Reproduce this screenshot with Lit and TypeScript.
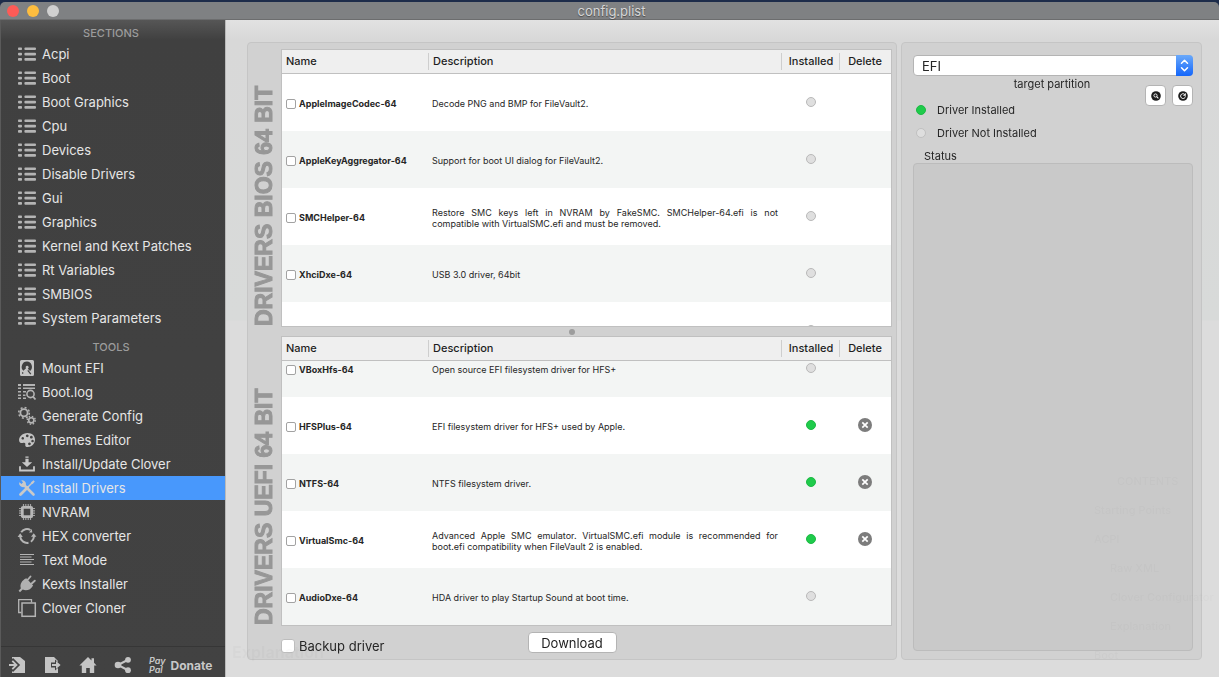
import { LitElement, html, css, svg, nothing } from "lit";
import { customElement, property, query } from "lit/decorators.js";
import { classMap } from "lit/directives/class-map.js";

interface Driver {
  name: string;
  description: string;
  installed: boolean;
}

const icons: Record<string, unknown> = {
  list: svg`<g fill="#b4b4b4"><rect x="0" y="2.500" width="4" height="2.600" rx=".8"/><rect x="0" y="7.800" width="4" height="2.600" rx=".8"/><rect x="0" y="13.100" width="4" height="2.600" rx=".8"/><rect x="6.400" y="2.500" width="11.600" height="2.600" rx="1"/><rect x="6.400" y="7.800" width="11.600" height="2.600" rx="1"/><rect x="6.400" y="13.100" width="11.600" height="2.600" rx="1"/></g>`,
  disk: svg`<path fill="#c4c4c4" fill-rule="evenodd" d="M3.500 1h11A1.500 1.500 0 0 1 16 2.500v13a1.500 1.500 0 0 1-1.500 1.500h-11A1.500 1.500 0 0 1 2 15.500v-13A1.500 1.500 0 0 1 3.500 1zM9 2.600a5.300 5.300 0 0 0-3.600 9.200L8 9.300a1.500 1.500 0 1 1 1.800.4l2.300 2.200A5.300 5.300 0 0 0 9 2.600zM4 13.300v1.500h1.300v-1.500zM9.300 11.800l3 3.700 1-.7-3-3.700z"/>`,
  log: svg`<g fill="#b4b4b4"><path d="M0 1h3v2H0zM5 1h12v2H5zM0 4.500h3v1.500H0zM5 4.500h12v1.500H5zM0 8h3v1.500H0zM5 8h3v1.500H5zM0 11.500h3V13H0zM5 11.500h2.500V13H5zM0 14.500h3V16H0zM5 14.500h3V16H5z"/></g><circle cx="12.500" cy="11" r="3.600" fill="#424242" stroke="#b4b4b4" stroke-width="1.600"/><path d="m15 13.700 2.500 2.800" stroke="#b4b4b4" stroke-width="1.800"/>`,
  gears: svg`<g fill="none" stroke="#b4b4b4"><circle cx="6" cy="5.800" r="3.600" stroke-width="1.800"/><circle cx="6" cy="5.800" r="5.300" stroke-width="1.600" stroke-dasharray="2 2.160"/><circle cx="13.300" cy="13.300" r="2.600" stroke-width="1.600"/><circle cx="13.300" cy="13.300" r="4" stroke-width="1.400" stroke-dasharray="1.500 1.640"/></g>`,
  palette: svg`<path fill="#c4c4c4" fill-rule="evenodd" d="M9.500 2C14 2 17 4.800 17 8.500c0 4.500-3.500 7.500-7.300 7.500-1.700 0-2.700-.9-2.400-2.300.3-1.500-.3-2.300-1.800-2-1.700.4-3.300.6-4.100-1C-.2 6.300 4.500 2 9.500 2zM9.200 3.400a1.400 1.400 0 1 0 .1 0zM4.700 6a1.300 1.300 0 1 0 .1 0zM13.300 4.800a1.400 1.400 0 1 0 .1 0zM14.500 8.700a1.300 1.300 0 1 0 .1 0zM11.400 11.400a1.400 1.400 0 1 0 .1 0z"/>`,
  download: svg`<path fill="#c8c8c8" d="M7.400 1.500h3.200v1.200H7.400zM7.400 3.700h3.200v3.600h3.600L9 12 3.800 7.300h3.600z"/><path fill="none" stroke="#c8c8c8" stroke-width="1.800" d="M2 11.300v4.200h14v-4.200"/>`,
  tools: svg`<path d="M5.500 5.500 15.500 15.500" stroke="#c9c9c9" stroke-width="2.600" stroke-linecap="round"/><path fill="#c9c9c9" d="M3.300 1.200 5 3.600 3.600 5 1.200 3.300A4 4 0 0 0 5.500 8.200L8 5.500A4 4 0 0 0 3.300 1.200z"/><path d="M2.500 15.500 9.500 8.500" stroke="#c9c9c9" stroke-width="2.800" stroke-linecap="round"/><path d="m9 9 5-5" stroke="#c9c9c9" stroke-width="1.500"/><path fill="#c9c9c9" d="m12.800 3.600 2.700-2.300 1.300 1.300-2.300 2.700z"/>`,
  chip: svg`<path stroke="#a4a4a4" stroke-width="1.200" d="M5.500 1v16M7.800 1v16M10.200 1v16M12.500 1v16M1 5.500h16M1 7.800h16M1 10.200h16M1 12.500h16"/><rect x="4.300" y="4.300" width="9.400" height="9.400" rx=".8" fill="#424242" stroke="#b8b8b8" stroke-width="2.800"/>`,
  cycle: svg`<g fill="none" stroke="#b4b4b4" stroke-width="2"><path d="M3.200 5.200A7 7 0 0 1 12.500 3M15.800 8a7 7 0 0 1-2.900 6.700M10.500 15.800A7 7 0 0 1 2.200 10"/></g><path fill="#b4b4b4" d="m13 9.800 2.700-3.600 2.700 3.600zM-.4 9.900 2.200 6.300l2.600 3.600zM11 5.600l3.300-.2-.5-3.400z"/>`,
  text: svg`<path stroke="#b4b4b4" stroke-width="1.100" d="M2 3.500h14M2 6h11.500M2 8.500h14M2 11h11.500M2 13.500h14"/>`,
  plug: svg`<path fill="#b0b0b0" d="m8.300 3.200 6.800 7.200c-2.300 4.400-6.600 5.800-10.400 4.200L2 17.200.6 15.700l2.300-2.400C1.500 9.500 3.700 5.200 8.300 3.200z"/><path stroke="#b0b0b0" stroke-width="1.900" stroke-linecap="round" d="m9.500 5 3-3.500M13.200 9l3.600-3.300"/>`,
  clone: svg`<path fill="none" stroke="#b4b4b4" stroke-width="1.300" d="M3.500 13.500H.7V.7h12.800v2.800"/><rect x="4" y="4" width="13.300" height="13.300" fill="none" stroke="#b4b4b4" stroke-width="1.500"/>`,
  import: svg`<path fill="#c4c4c4" d="M3 1h8l5 4v12H3z"/><path fill="none" stroke="#424242" stroke-width="4.400" d="M0 9h6.500M2.500 3.500 8 9l-5.500 5.500"/><path fill="none" stroke="#c4c4c4" stroke-width="1.800" d="M0 9h7M3.300 4.800 7.500 9l-4.200 4.200"/>`,
  export: svg`<path fill="#c4c4c4" d="M1 1h9l4 4v12H1z"/><path d="M7 9h6.500" stroke="#424242" stroke-width="5"/><path fill="#424242" d="m11 3.500 6.500 5.500-6.500 5.500z"/><path fill="#c4c4c4" d="M8 7.900h4V5l4.600 4-4.600 4v-2.900H8z"/>`,
  home: svg`<path fill="#c4c4c4" d="M9 1 12.500 4.400V2.300H15v4.500L17.600 9.500H15.200V17H10.800v-5H7.200v5H2.800V9.500H.4z"/>`,
  share: svg`<path fill="none" stroke="#c4c4c4" stroke-width="2" d="M13.500 4 4 9l9.500 5"/><g fill="#c4c4c4"><circle cx="14" cy="3.800" r="2.900"/><circle cx="4" cy="9" r="3.300"/><circle cx="14" cy="14.200" r="2.900"/></g>`,
};

const icon = (name: string) =>
  html`<svg class="icon" viewBox="0 0 18 18" width="18" height="18" aria-hidden="true">${icons[name]}</svg>`;

@customElement("side-nav")
export class SideNav extends LitElement {
  static styles = css`
    :host {
      display: flex;
      flex-direction: column;
      background: linear-gradient(#565656, #404040 20px, #424242);
      color: #e6e6e6;
      border-left: 1px solid #5a5a5a;
      box-sizing: border-box;
    }
    nav { flex: 1; padding-top: 4px; }
    h2 {
      margin: 0;
      padding-right: 4px;
      font-size: 11px;
      font-weight: 500;
      line-height: 18px;
      text-align: center;
      color: #9c9c9c;
    }
    ul { list-style: none; margin: 0 0 8px; padding: 0; }
    .item {
      display: flex;
      align-items: center;
      gap: 6px;
      height: 24px;
      padding-left: 17px;
      font-size: 13px;
      color: inherit;
      text-decoration: none;
    }
    .current { background: #4898fc; }
    .icon { flex: none; overflow: visible; }
    .bar {
      display: flex;
      align-items: center;
      gap: 17px;
      height: 22px;
      padding: 7px 8px 1px;
      border-top: 1px solid #363636;
    }
    .tool {
      display: flex;
      align-items: center;
      gap: 5px;
      padding: 0;
      border: 0;
      background: none;
      color: #c8c8c8;
      font: inherit;
    }
    .paypal {
      font-size: 9px;
      font-style: italic;
      font-weight: 600;
      line-height: 9px;
      text-align: left;
    }
    .donate { font-size: 12px; font-weight: 700; }
  `;

  private sections = ["Acpi", "Boot", "Boot Graphics", "Cpu", "Devices", "Disable Drivers", "Gui",
    "Graphics", "Kernel and Kext Patches", "Rt Variables", "SMBIOS", "System Parameters"];

  private tools: [string, string][] = [
    ["disk", "Mount EFI"], ["log", "Boot.log"], ["gears", "Generate Config"],
    ["palette", "Themes Editor"], ["download", "Install/Update Clover"], ["tools", "Install Drivers"],
    ["chip", "NVRAM"], ["cycle", "HEX converter"], ["text", "Text Mode"],
    ["plug", "Kexts Installer"], ["clone", "Clover Cloner"],
  ];

  private item(glyph: string, label: string) {
    const current = label === "Install Drivers";
    return html`<li><a class=${classMap({ item: true, current })} href="#"
      aria-current=${current ? "page" : nothing}>${icon(glyph)}<span>${label}</span></a></li>`;
  }

  render() {
    return html`
      <nav aria-label="Configuration">
        <h2>SECTIONS</h2>
        <ul>${this.sections.map((s) => this.item("list", s))}</ul>
        <h2>TOOLS</h2>
        <ul>${this.tools.map(([g, l]) => this.item(g, l))}</ul>
      </nav>
      <div class="bar">
        <button class="tool" aria-label="Import">${icon("import")}</button>
        <button class="tool" aria-label="Export">${icon("export")}</button>
        <button class="tool" aria-label="Home">${icon("home")}</button>
        <button class="tool" aria-label="Share">${icon("share")}</button>
        <button class="tool"><span class="paypal">Pay<br>Pal</span><span class="donate">Donate</span></button>
      </div>
    `;
  }
}

@customElement("driver-table")
export class DriverTable extends LitElement {
  @property() heading = "";
  @property({ attribute: false }) drivers: Driver[] = [];
  @property({ type: Boolean }) striped = false;
  @property({ type: Number }) offset = 0;
  @query(".scroller") private scroller!: HTMLElement;

  static styles = css`
    :host { display: flex; min-height: 0; }
    .heading {
      flex: none;
      margin: 0;
      width: 33px;
      box-sizing: border-box;
      padding-top: 1px;
      writing-mode: vertical-rl;
      transform: rotate(180deg);
      font-family: "Liberation Sans", sans-serif;
      font-size: 23px;
      font-weight: 700;
      line-height: 33px;
      color: #979797;
      -webkit-text-stroke: 1px #979797;
      white-space: nowrap;
    }
    .scroller {
      flex: 1;
      min-width: 0;
      overflow: auto;
      scrollbar-width: none;
      border: 1px solid #c0c0c0;
      background: #fff;
    }
    table { width: 100%; border-spacing: 0; table-layout: fixed; }
    th {
      position: sticky;
      top: 0;
      z-index: 1;
      box-sizing: border-box;
      height: 24px;
      padding: 0 4px 2px;
      border-bottom: 1px solid #c0c0c0;
      background: linear-gradient(#cecece, #cecece) no-repeat right center / 1px 17px, #efefef;
      font-size: 11px;
      font-weight: 500;
      text-align: left;
      color: #1e1e1e;
    }
    th:last-child { background: #efefef; }
    .name-col { width: 147px; }
    .installed-col { width: 58px; }
    .delete-col { width: 51px; }
    th.mid, td.mid { padding: 0 0 2px; text-align: center; }
    th.mid:last-child, td.mid:last-child { padding-right: 1px; }
    td { height: 57px; padding: 0 4px; box-sizing: border-box; font-size: 9px; line-height: 11px; color: #262626; }
    td.text { padding: 2px 4px 0 3px; text-align: justify; }
    .shade td { background: #f3f5f4; }
    .pick { display: flex; align-items: center; gap: 3px; padding-top: 2px; font-weight: 700; }
    input {
      appearance: none;
      flex: none;
      width: 10px;
      height: 10px;
      margin: 0;
      border: 1px solid #a2a2a2;
      border-radius: 2px;
      background: #fff;
    }
    .dot {
      display: inline-block;
      box-sizing: border-box;
      width: 10px;
      height: 10px;
      border: 1px solid #b9b9b9;
      border-radius: 50%;
      background: #dfdfdf;
      vertical-align: middle;
    }
    .dot.on { background: #1fcb4b; border-color: #1cb944; }
    .remove { padding: 0; border: 0; background: none; vertical-align: middle; }
    .remove svg { display: block; }
  `;

  firstUpdated() {
    this.scroller.scrollTop = this.offset;
  }

  render() {
    return html`
      <h2 class="heading">${this.heading}</h2>
      <div class="scroller">
        <table>
          <thead>
            <tr>
              <th class="name-col" scope="col">Name</th>
              <th scope="col">Description</th>
              <th class="mid installed-col" scope="col">Installed</th>
              <th class="mid delete-col" scope="col">Delete</th>
            </tr>
          </thead>
          <tbody>
            ${this.drivers.map((d, i) => html`
              <tr class=${classMap({ shade: (i % 2 === 0) === this.striped })}>
                <td><label class="pick"><input type="checkbox" aria-label=${d.name || "Driver"}>${d.name}</label></td>
                <td class="text">${d.description}</td>
                <td class="mid"><span class=${classMap({ dot: true, on: d.installed })}></span></td>
                <td class="mid">${d.installed ? html`
                  <button class="remove" aria-label="Delete ${d.name}">
                    <svg width="14" height="14" viewBox="0 0 14 14"><circle cx="7" cy="7" r="7" fill="#7c7c7c"/><path d="m4.300 4.300 5.400 5.400m0-5.400-5.400 5.400" stroke="#fff" stroke-width="1.700"/></svg>
                  </button>` : nothing}</td>
              </tr>`)}
          </tbody>
        </table>
      </div>
    `;
  }
}

@customElement("partition-panel")
export class PartitionPanel extends LitElement {
  static styles = css`
    :host { display: flex; flex-direction: column; box-sizing: border-box; font-size: 11px; color: #262626; }
    .popup { display: grid; grid-template-columns: 1fr 17px; height: 21px; }
    select {
      grid-area: 1 / 1 / 2 / 3;
      appearance: none;
      padding: 0 24px 0 8px;
      border: 1px solid #b4b4b4;
      border-radius: 4px;
      background: #fff;
      color: #262626;
      font: inherit;
      font-size: 13px;
    }
    .arrows {
      grid-area: 1 / 2;
      z-index: 1;
      pointer-events: none;
      border-radius: 0 4px 4px 0;
      background: linear-gradient(#6aa9fa, #1466fb);
    }
    .row { display: grid; grid-template-columns: 1fr auto; align-items: start; height: 22px; }
    .caption { grid-area: 1 / 1 / 2 / 3; line-height: 16px; text-align: center; padding-right: 2px; }
    .actions { grid-area: 1 / 2; display: flex; gap: 6px; padding-top: 9px; }
    .action {
      display: grid;
      place-items: center;
      width: 21px;
      height: 21px;
      padding: 0;
      border: 1px solid #b4b4b4;
      border-radius: 4px;
      background: #fff;
    }
    .legend { margin: 0; padding: 0 3px; list-style: none; }
    .legend li { display: flex; align-items: center; gap: 11px; height: 23px; }
    .dot { box-sizing: border-box; width: 10px; height: 10px; border: 1px solid #c0c0c0; border-radius: 50%; background: #dedede; }
    .dot.on { background: #1fcb4b; border-color: #1cb944; }
    .status { margin: 0; padding: 5px 11px 0; font-size: 11px; font-weight: 400; line-height: 14px; }
    .log { flex: 1; border: 1px solid #bcbcbc; border-radius: 4px; background: #c9c9c9; }
  `;

  render() {
    return html`
      <div class="popup">
        <select id="partition" aria-label="target partition"><option>EFI</option></select>
        <svg class="arrows" width="17" height="21" viewBox="0 0 17 21" fill="none" stroke="#fff" stroke-width="1.500" stroke-linecap="round" stroke-linejoin="round" aria-hidden="true"><path d="m5.500 8.300 3-3 3 3M5.500 12.700l3 3 3-3"/></svg>
      </div>
      <div class="row">
        <label class="caption" for="partition">target partition</label>
        <div class="actions">
          <button class="action" aria-label="Search"><svg width="10" height="10" viewBox="0 0 10 10"><circle cx="5" cy="5" r="4.800" fill="#1c1c1c"/><circle cx="4.500" cy="4.500" r="1.600" fill="none" stroke="#fff" stroke-width=".9"/><path d="m5.700 5.700 1.700 1.700" stroke="#fff" stroke-width="1.100"/></svg></button>
          <button class="action" aria-label="Refresh"><svg width="10" height="10" viewBox="0 0 10 10"><circle cx="5" cy="5" r="4.800" fill="#1c1c1c"/><path fill="none" stroke="#fff" stroke-width="1" d="M6.600 3.300A2.400 2.400 0 1 0 7.400 5.400"/><path fill="#fff" d="M7.800 1.900v2.900H4.900z"/></svg></button>
        </div>
      </div>
      <ul class="legend">
        <li><span class="dot on"></span>Driver Installed</li>
        <li><span class="dot"></span>Driver Not Installed</li>
      </ul>
      <h2 class="status">Status</h2>
      <div class="log" role="log"></div>
    `;
  }
}

@customElement("app-root")
export class AppRoot extends LitElement {
  static styles = css`
    :host {
      display: flex;
      flex-direction: column;
      height: 100vh;
      overflow: hidden;
      background: #1d2c4a;
      font-family: Inter, "Liberation Sans", sans-serif;
    }
    .titlebar {
      display: grid;
      grid-template-columns: 1fr auto 1fr;
      align-items: center;
      height: 18px;
      margin-top: 2px;
      padding: 0 3px 0 7px;
      border-radius: 5px 5px 0 0;
      background: #7f8183;
      border-bottom: 1px solid #6c6d6e;
      box-sizing: border-box;
    }
    .lights { display: flex; gap: 8px; }
    .light { width: 12px; height: 12px; padding: 0; border: 0; border-radius: 50%; }
    .close { background: #fc5b57; }
    .minimize { background: #fdbd3f; }
    .zoom { background: #d0d0d0; }
    .title {
      margin: 0;
      font-size: 13px;
      font-weight: 400;
      line-height: 18px;
      color: #d6d6d6;
      text-shadow: 0 1px 1px #4a4a4a;
    }
    .window { position: relative; flex: 1; min-height: 0; display: flex; background: #dcdcdc; }
    side-nav { flex: none; width: 225px; }
    main {
      flex: 1;
      min-width: 0;
      display: flex;
      gap: 4px;
      padding: 22px 17px 17px 21px;
      border-left: 1px solid #b9b9b9;
      background: linear-gradient(#e2e2e2, #d8d8d8 20px, #d8dad9 300px, #dcdcdc 301px);
    }
    .box {
      box-sizing: border-box;
      border: 1px solid #c5c5c5;
      border-radius: 4px;
      background: #d1d1d1;
    }
    .drivers { flex: 1; min-width: 0; display: flex; flex-direction: column; padding: 6px 4px 0 0; }
    .bios { flex: 278 1 0; }
    .uefi { flex: 290 1 0; }
    .splitter { flex: none; display: grid; place-items: center; height: 9px; padding-left: 4px; }
    .grip { width: 6px; height: 6px; border-radius: 50%; background: #9d9d9d; }
    .footer {
      flex: none;
      display: grid;
      grid-template-columns: 1fr auto 1fr;
      height: 33px;
      align-items: center;
      padding-left: 4px;
    }
    .backup { display: flex; align-items: center; gap: 4px; padding: 7px 0 0 29px; font-size: 13px; color: #262626; }
    .backup input {
      appearance: none;
      width: 14px;
      height: 14px;
      margin: 0;
      border: 1px solid #bdbdbd;
      border-radius: 3px;
      background: #fff;
    }
    .download {
      width: 89px;
      height: 21px;
      padding: 0;
      border: 1px solid #b4b4b4;
      border-radius: 4px;
      background: #fff;
      color: #1e1e1e;
      font: inherit;
      font-size: 13px;
    }
    partition-panel { flex: none; width: 301px; padding: 12px 8px 8px 11px; }

    /* Page behind the translucent window */
    .behind {
      position: absolute;
      pointer-events: none;
      color: rgb(0 0 0 / 2%);
      font-size: 11px;
      font-weight: 500;
      line-height: 29px;
      white-space: nowrap;
    }
    .behind p { margin: 0; }
    .contents { right: 0; bottom: 7px; width: 125px; }
    .contents .lead { padding-left: 23px; }
    .contents .sub { padding-left: 16px; }
    .article { left: 232px; bottom: 10px; font-size: 16px; font-weight: 700; }
  `;

  private bios: Driver[] = [
    { name: "AppleImageCodec-64", description: "Decode PNG and BMP for FileVault2.", installed: false },
    { name: "AppleKeyAggregator-64", description: "Support for boot UI dialog for FileVault2.", installed: false },
    { name: "SMCHelper-64", description: "Restore SMC keys left in NVRAM by FakeSMC. SMCHelper-64.efi is not compatible with VirtualSMC.efi and must be removed.", installed: false },
    { name: "XhciDxe-64", description: "USB 3.0 driver, 64bit", installed: false },
    { name: "", description: "", installed: false },
  ];

  private uefi: Driver[] = [
    { name: "VBoxHfs-64", description: "Open source EFI filesystem driver for HFS+", installed: false },
    { name: "HFSPlus-64", description: "EFI filesystem driver for HFS+ used by Apple.", installed: true },
    { name: "NTFS-64", description: "NTFS filesystem driver.", installed: true },
    { name: "VirtualSmc-64", description: "Advanced Apple SMC emulator. VirtualSMC.efi module is recommended for boot.efi compatibility when FileVault 2 is enabled.", installed: true },
    { name: "AudioDxe-64", description: "HDA driver to play Startup Sound at boot time.", installed: false },
  ];

  render() {
    return html`
      <header class="titlebar">
        <div class="lights">
          <button class="light close" aria-label="Close"></button>
          <button class="light minimize" aria-label="Minimize"></button>
          <button class="light zoom" aria-label="Zoom"></button>
        </div>
        <h1 class="title">config.plist</h1>
      </header>
      <div class="window">
        <side-nav></side-nav>
        <main>
          <section class="box drivers">
            <driver-table class="bios" heading="DRIVERS BIOS 64 BIT" .drivers=${this.bios}></driver-table>
            <div class="splitter"><span class="grip"></span></div>
            <driver-table class="uefi" heading="DRIVERS UEFI 64 BIT" striped .offset=${21} .drivers=${this.uefi}></driver-table>
            <div class="footer">
              <label class="backup"><input type="checkbox">Backup driver</label>
              <button class="download">Download</button>
            </div>
          </section>
          <partition-panel class="box"></partition-panel>
        </main>
        <div class="behind contents" aria-hidden="true">
          <p class="lead">CONTENTS</p>
          <p>Starting Points</p>
          <p>ACPI</p>
          <p class="sub">Raw XML</p>
          <p class="sub">Clover Configurator</p>
          <p class="sub">Explanation</p>
          <p>Boot</p>
        </div>
        <div class="behind article" aria-hidden="true">Explanation</div>
      </div>
    `;
  }
}
